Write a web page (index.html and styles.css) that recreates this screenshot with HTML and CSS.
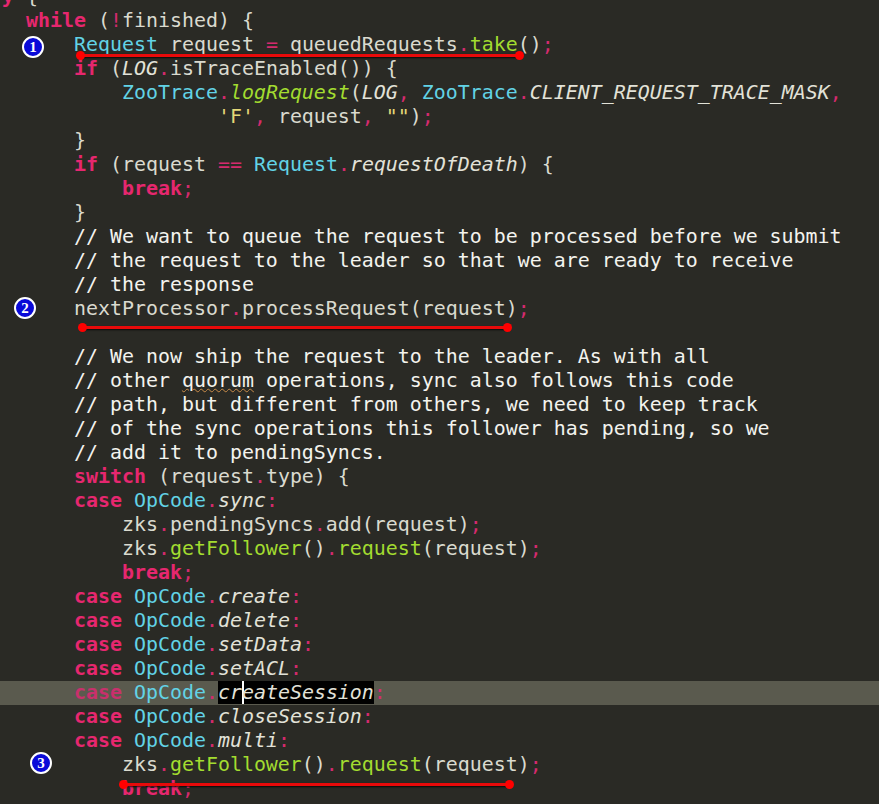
FILE: index.html
```html
<!DOCTYPE html>
<html lang="en">
<head>
    <meta charset="UTF-8">
    <meta name="viewport" content="width=device-width, initial-scale=1.0">
    <title>FollowerRequestProcessor</title>
    <link rel="stylesheet" href="styles.css">
</head>
<body>
    <div class="screen">
        <div class="editor">
<div class="line"><span class="k">y</span> {</div>
<div class="line">  <span class="k">while</span> (<span class="p">!</span>finished) {</div>
<div class="line">      <span class="t">Request</span> request <span class="p">=</span> queuedRequests<span class="p">.</span><span class="f">take</span>()<span class="p">;</span></div>
<div class="line">      <span class="k">if</span> (<span class="c">LOG</span><span class="p">.</span>isTraceEnabled()) {</div>
<div class="line">          <span class="t">ZooTrace</span><span class="p">.</span><span class="fi">logRequest</span>(<span class="c">LOG</span><span class="p">,</span> <span class="t">ZooTrace</span><span class="p">.</span><span class="c">CLIENT_REQUEST_TRACE_MASK</span><span class="p">,</span></div>
<div class="line">                  <span class="s">'F'</span><span class="p">,</span> request<span class="p">,</span> <span class="s">""</span>)<span class="p">;</span></div>
<div class="line">      }</div>
<div class="line">      <span class="k">if</span> (request <span class="p">==</span> <span class="t">Request</span><span class="p">.</span><span class="c">requestOfDeath</span>) {</div>
<div class="line">          <span class="k">break</span><span class="p">;</span></div>
<div class="line">      }</div>
<div class="line cm">      // We want to queue the request to be processed before we submit</div>
<div class="line cm">      // the request to the leader so that we are ready to receive</div>
<div class="line cm">      // the response</div>
<div class="line">      nextProcessor<span class="p">.</span>processRequest(request)<span class="p">;</span></div>
<div class="line"> </div>
<div class="line cm">      // We now ship the request to the leader. As with all</div>
<div class="line cm">      // other <span class="spell">quorum</span> operations, sync also follows this code</div>
<div class="line cm">      // path, but different from others, we need to keep track</div>
<div class="line cm">      // of the sync operations this follower has pending, so we</div>
<div class="line cm">      // add it to pendingSyncs.</div>
<div class="line">      <span class="k">switch</span> (request<span class="p">.</span>type) {</div>
<div class="line">      <span class="k">case</span> <span class="t">OpCode</span><span class="p">.</span><span class="c">sync</span><span class="p">:</span></div>
<div class="line">          zks<span class="p">.</span>pendingSyncs<span class="p">.</span>add(request)<span class="p">;</span></div>
<div class="line">          zks<span class="p">.</span><span class="f">getFollower</span>()<span class="p">.</span><span class="f">request</span>(request)<span class="p">;</span></div>
<div class="line">          <span class="k">break</span><span class="p">;</span></div>
<div class="line">      <span class="k">case</span> <span class="t">OpCode</span><span class="p">.</span><span class="c">create</span><span class="p">:</span></div>
<div class="line">      <span class="k">case</span> <span class="t">OpCode</span><span class="p">.</span><span class="c">delete</span><span class="p">:</span></div>
<div class="line">      <span class="k">case</span> <span class="t">OpCode</span><span class="p">.</span><span class="c">setData</span><span class="p">:</span></div>
<div class="line">      <span class="k">case</span> <span class="t">OpCode</span><span class="p">.</span><span class="c">setACL</span><span class="p">:</span></div>
<div class="line current">      <span class="k">case</span> <span class="t">OpCode</span><span class="p">.</span><span class="c sel">cr<span class="caret">eateSession</span></span><span class="p">:</span></div>
<div class="line">      <span class="k">case</span> <span class="t">OpCode</span><span class="p">.</span><span class="c">closeSession</span><span class="p">:</span></div>
<div class="line">      <span class="k">case</span> <span class="t">OpCode</span><span class="p">.</span><span class="c">multi</span><span class="p">:</span></div>
<div class="line">          zks<span class="p">.</span><span class="f">getFollower</span>()<span class="p">.</span><span class="f">request</span>(request)<span class="p">;</span></div>
<div class="line">          <span class="k">break</span><span class="p">;</span></div>
        </div>

        <!-- annotations drawn over the code -->
        <div class="mark mark-1"></div>
        <div class="mark mark-2"></div>
        <div class="mark mark-3"></div>
        <div class="badge badge-1">1</div>
        <div class="badge badge-2">2</div>
        <div class="badge badge-3">3</div>
    </div>
</body>
</html>
```

FILE: styles.css
```css
html, body {
    margin: 0;
    padding: 0;
    background-color: #2a2a25;
}
.screen {
    position: relative;
    width: 879px;
    height: 804px;
    overflow: hidden;
    background-color: #2a2a25;
}
.editor {
    margin-top: -15px;
    font-family: "DejaVu Sans Mono", "Liberation Mono", monospace;
    font-size: 19.93px;
    line-height: 24px;
    color: #dadacf;
}
.line {
    height: 24px;
    padding-left: 2px;
    white-space: pre;
}
.line.current {
    background-color: #5a5a4e;
}
.k {
    color: #e6276f;
    font-weight: bold;
}
.p {
    color: #d42a6e;
}
.t {
    color: #62d3e6;
}
.f {
    color: #a3dc30;
}
.fi {
    color: #a3dc30;
    font-style: italic;
}
.c {
    color: #e2e2d8;
    font-style: italic;
}
.s {
    color: #e4d877;
}
.cm {
    color: #f3f3ee;
}
.spell {
    text-decoration: underline wavy #c88a48;
    text-decoration-thickness: 1px;
    text-underline-offset: 1px;
}
.current .k {
    color: #c8306c;
}
.sel {
    background-color: #000;
}
.caret {
    box-shadow: inset 2px 0 0 #fff;
}

.mark {
    position: absolute;
    height: 3px;
    background-color: #e80a0a;
    box-shadow: 0 1px 2px rgba(0, 0, 0, 0.8);
}
.mark::before,
.mark::after {
    content: "";
    position: absolute;
    top: -3px;
    width: 9px;
    height: 9px;
    border-radius: 50%;
    background-color: #f00;
}
.mark::before {
    left: -4px;
}
.mark::after {
    right: -4px;
}
.mark-1 {
    left: 80px;
    top: 54px;
    width: 440px;
}
.mark-2 {
    left: 82px;
    top: 326px;
    width: 426px;
}
.mark-3 {
    left: 123px;
    top: 783px;
    width: 387px;
}

.badge {
    position: absolute;
    width: 18px;
    height: 18px;
    border: 2px solid #fff;
    border-radius: 50%;
    background-color: #0a0ad8;
    color: #fff;
    font-family: "Liberation Serif", serif;
    font-weight: bold;
    font-size: 15px;
    line-height: 18px;
    text-align: center;
}
.badge-1 {
    left: 22px;
    top: 36px;
}
.badge-2 {
    left: 14px;
    top: 297px;
}
.badge-3 {
    left: 30px;
    top: 752px;
}
```
